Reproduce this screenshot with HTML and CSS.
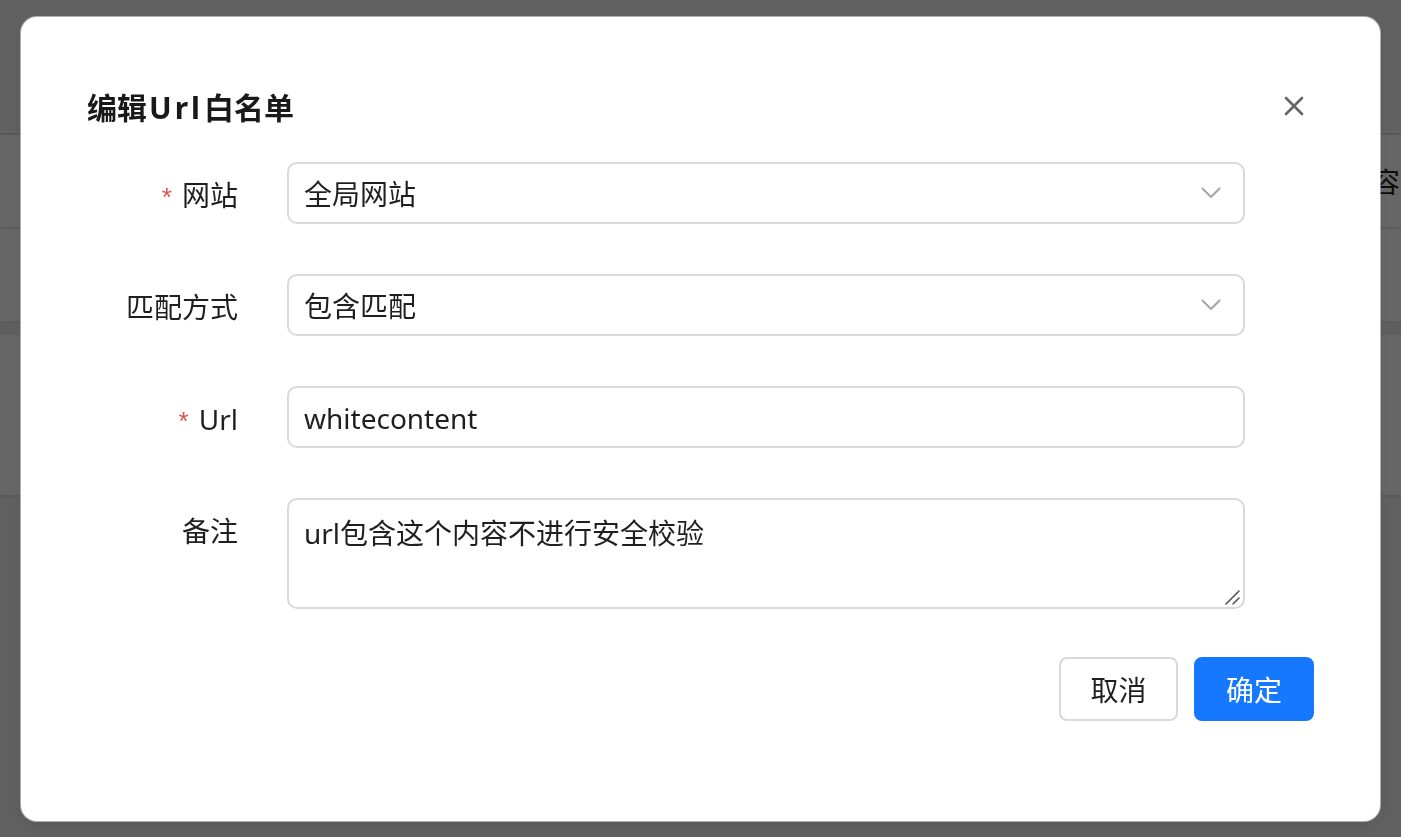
FILE: index.html
```html
<!DOCTYPE html>
<html lang="zh-CN">
<head>
<meta charset="utf-8">
<title>编辑Url白名单</title>
<link rel="stylesheet" href="styles.css">
</head>
<body>
<div class="page">
  <div class="page-top"></div>
  <div class="page-row"><span class="cell-text">内容安全</span></div>
  <div class="page-row"></div>
  <div class="page-head"></div>
  <div class="page-row tall"></div>
  <div class="page-rest"></div>
</div>
<div class="mask"></div>
<div class="modal-wrap">
  <div class="modal">
    <div class="modal-header">
      <div class="modal-title">编辑<span class="title-latin">Url</span>白名单</div>
      <button class="modal-close" type="button" aria-label="close">
        <svg width="20" height="20" viewBox="0 0 20 20"><path d="M2 2 L18 18 M18 2 L2 18" stroke="#666" stroke-width="2.6" stroke-linecap="round" fill="none"/></svg>
      </button>
    </div>
    <div class="form">
      <div class="form-row">
        <label class="form-label"><span class="req">*</span>网站</label>
        <div class="select">
          <span class="select-value">全局网站</span>
          <svg class="chevron" width="20" height="12" viewBox="0 0 20 12"><path d="M1.5 1.5 L10 10 L18.5 1.5" stroke="#a6a6a6" stroke-width="2" fill="none" stroke-linecap="round" stroke-linejoin="round"/></svg>
        </div>
      </div>
      <div class="form-row">
        <label class="form-label">匹配方式</label>
        <div class="select">
          <span class="select-value">包含匹配</span>
          <svg class="chevron" width="20" height="12" viewBox="0 0 20 12"><path d="M1.5 1.5 L10 10 L18.5 1.5" stroke="#a6a6a6" stroke-width="2" fill="none" stroke-linecap="round" stroke-linejoin="round"/></svg>
        </div>
      </div>
      <div class="form-row">
        <label class="form-label"><span class="req">*</span>Url</label>
        <div class="input"><span>whitecontent</span></div>
      </div>
      <div class="form-row last">
        <label class="form-label">备注</label>
        <div class="textarea">
          <span>url包含这个内容不进行安全校验</span>
          <svg class="resize" width="18" height="18" viewBox="0 0 18 18"><path d="M16 3 L3 16 M16 10 L10 16" stroke="#555" stroke-width="1.6" stroke-linecap="round"/></svg>
        </div>
      </div>
    </div>
    <div class="modal-footer">
      <button class="btn" type="button">取消</button>
      <button class="btn btn-primary" type="button">确定</button>
    </div>
  </div>
</div>
</body>
</html>
```

FILE: styles.css
```css
* { box-sizing: border-box; }
html, body { margin: 0; padding: 0; }
body {
  width: 1401px;
  height: 837px;
  overflow: hidden;
  font-family: "Noto Sans", "Noto Sans CJK SC", sans-serif;
  color: rgba(0, 0, 0, 0.88);
  background: #f0f0f0;
}

/* underlying page */
.page { display: flex; flex-direction: column; height: 837px; }
.page-top { height: 135px; background: #f3f3f3; border-bottom: 2px solid #dedede; }
.page-row {
  height: 94px;
  background: #ffffff;
  border-bottom: 2px solid #e6e6e6;
  display: flex;
  align-items: center;
  padding-left: 1344px;
  overflow: hidden;
  white-space: nowrap;
}
.page-row.tall { height: 162px; border-bottom: 2px solid #e0e0e0; }
.page-head { height: 12px; background: #ececec; }
.page-rest { flex: 1; background: #f0f0f0; }
.cell-text { font-size: 28px; color: #222; font-family: "Noto Sans CJK SC", sans-serif; }

.mask {
  position: fixed;
  inset: 0;
  background: rgba(0, 0, 0, 0.6);
}

.modal-wrap {
  position: fixed;
  inset: 0;
  display: flex;
  align-items: center;
  justify-content: center;
}
.modal {
  width: 1359px;
  height: 804px;
  background: #ffffff;
  border-radius: 16px;
  box-shadow: 0 0 0 1px rgba(255,255,255,0.5), 0 6px 16px rgba(0,0,0,0.08);
  padding: 68px 66px 0 66px;
}
.modal-header {
  display: flex;
  align-items: center;
  justify-content: space-between;
  height: 44px;
}
.modal-title {
  font-size: 30px;
  font-weight: 700;
  line-height: 44px;
  color: rgba(0, 0, 0, 0.9);
  font-family: "Noto Sans CJK SC", sans-serif;
  white-space: nowrap;
}
.title-latin {
  font-family: "Noto Sans", sans-serif;
  letter-spacing: 3px;
  padding: 0 1px 0 2px;
}
.modal-close {
  width: 40px;
  height: 40px;
  border: 0;
  background: transparent;
  padding: 0;
  display: flex;
  align-items: center;
  justify-content: center;
  margin-top: -2px;
}

.form { margin-top: 33px; width: 1158px; }
.form-row { display: flex; align-items: flex-start; margin-bottom: 50px; }
.form-row.last { margin-bottom: 0; }
.form-label {
  width: 151px;
  height: 62px;
  flex: none;
  text-align: right;
  font-size: 28px;
  line-height: 66px;
  margin-right: 49px;
  white-space: nowrap;
  overflow: visible;
}
.req {
  color: #e0524f;
  margin-right: 10px;
  font-family: "Liberation Sans", sans-serif;
  font-size: 26px;
  line-height: 1;
}
.select, .input, .textarea {
  width: 958px;
  height: 62px;
  flex: none;
  border: 2px solid #d9d9d9;
  border-radius: 10px;
  background: #fff;
  font-size: 28px;
  display: flex;
  align-items: center;
  padding: 3px 15px 0;
  color: rgba(0, 0, 0, 0.88);
}
.select { justify-content: space-between; padding-right: 22px; }
.select-value { line-height: 40px; }
.chevron { display: block; margin-top: -2px; }
.textarea {
  height: 111px;
  align-items: flex-start;
  padding-top: 13px;
  position: relative;
}
.textarea span { line-height: 40px; }
.resize { position: absolute; right: 2px; bottom: 1px; }

.modal-footer {
  margin-top: 48px;
  display: flex;
  justify-content: flex-end;
  gap: 16px;
}
.btn {
  width: 119px;
  height: 64px;
  border: 2px solid #d9d9d9;
  border-radius: 8px;
  background: #fff;
  font-size: 28px;
  font-family: "Noto Sans CJK SC", sans-serif;
  color: rgba(0, 0, 0, 0.88);
  padding: 0;
}
.btn-primary {
  background: #1677ff;
  border-color: #1677ff;
  color: #fff;
  width: 120px;
}
```
